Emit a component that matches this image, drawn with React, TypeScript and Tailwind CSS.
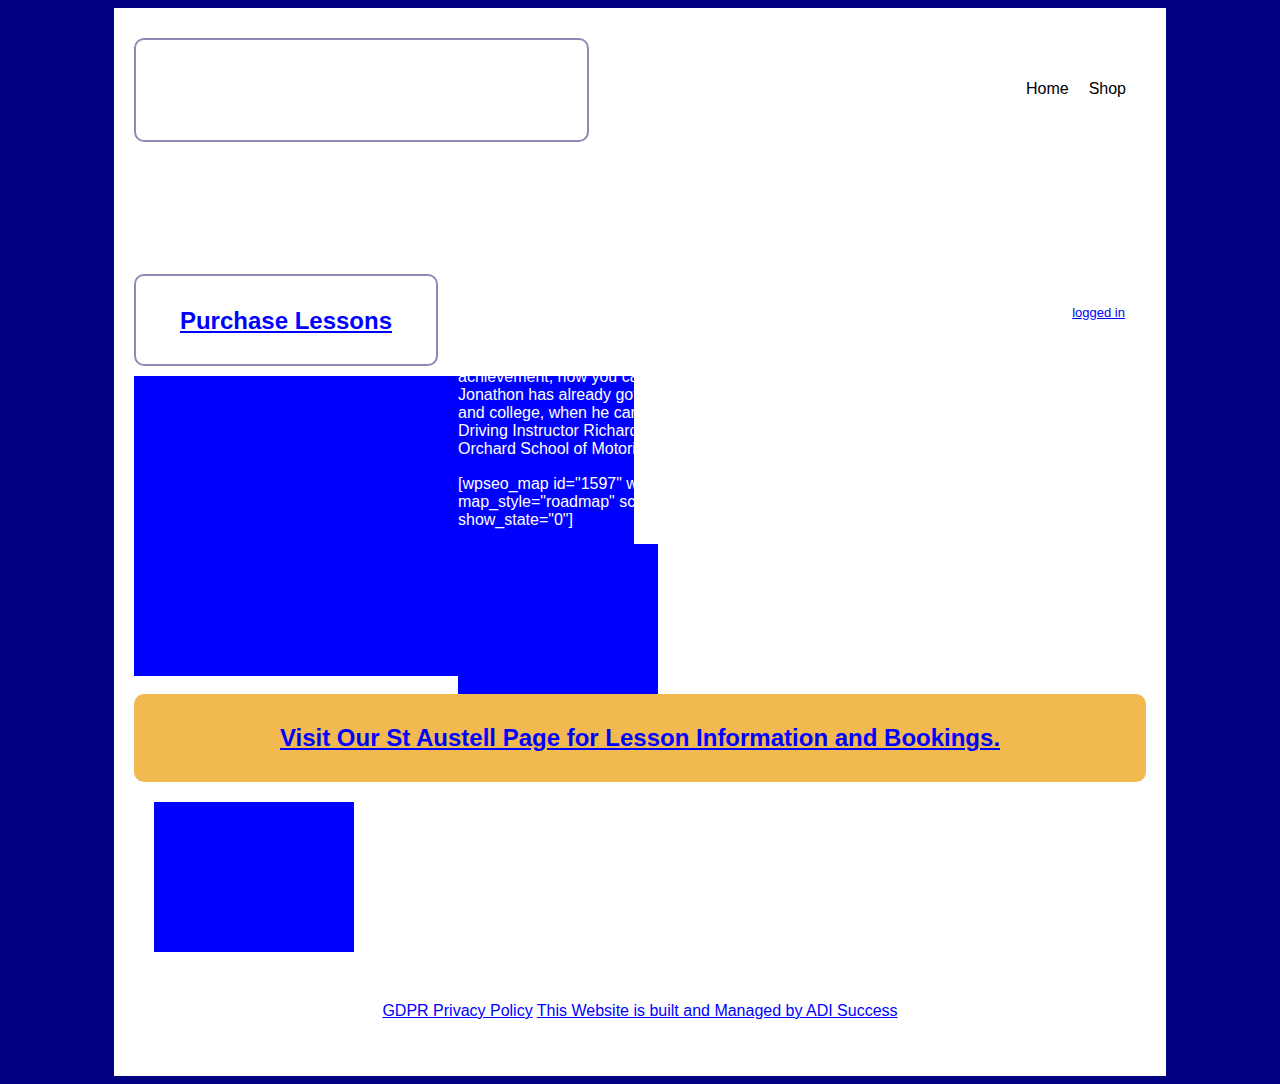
import React from "react";

function App() {
  return (
    <div className="min-h-screen bg-[#000080] py-2 font-['Liberation_Sans',Arial,sans-serif]">
      <div className="mx-auto w-[1052px] bg-white px-5 pt-[30px]">
        {/* header */}
        <div className="flex items-center justify-between">
          <div className="h-[104px] w-[455px] rounded-[10px] border-2 border-[#8e8ab5]"></div>
          <nav className="mb-[2px] flex gap-5 pr-5 text-base leading-[18px] text-black">
            <a href="#">Home</a>
            <a href="#">Shop</a>
          </nav>
        </div>

        <div className="mt-[132px] flex justify-between">
          <div className="flex h-[92px] w-[304px] items-center justify-center rounded-[10px] border-2 border-[#8e8ab5] pt-[2px]">
            <a href="#" className="text-2xl font-bold text-[#0000ff] underline">
              Purchase Lessons
            </a>
          </div>
          <a
            href="#"
            className="mr-[21px] mt-[31px] self-start text-[13px] leading-[15px] text-[#0000ff] underline"
          >
            logged in
          </a>
        </div>

        <div className="mt-[10px] flex">
          <div className="h-[300px] w-[324px] bg-[#0000ff]"></div>
          <div className="flex w-[200px] flex-col">
            <div className="h-[168px] w-[176px] overflow-hidden bg-[#0000ff] text-base leading-[18px] text-white">
              <div className="-mt-[8px] whitespace-nowrap">
                <p>
                  achievement, now you can do it too.
                  <br />
                  Jonathon has already got his licence
                  <br />
                  and college, when he came to his
                  <br />
                  Driving Instructor Richard at The
                  <br />
                  Orchard School of Motoring.
                </p>
                <p className="mt-[17px]">
                  [wpseo_map id="1597" width="100%"
                  <br />
                  map_style="roadmap" scrollable="1"
                  <br />
                  show_state="0"]
                </p>
              </div>
            </div>
            <div className="h-[150px] w-[200px] bg-[#0000ff]"></div>
          </div>
        </div>

        <div className="flex h-[88px] items-center justify-center rounded-[10px] bg-[#f2b950]">
          <a href="#" className="text-2xl font-bold text-[#0000ff] underline">
            Visit Our St Austell Page for Lesson Information and Bookings.
          </a>
        </div>

        <div className="ml-5 mt-5 h-[150px] w-[200px] bg-[#0000ff]"></div>

        <footer className="pb-[56px] pt-[50px] text-center text-base leading-[18px]">
          <a href="#" className="text-[#0000ff] underline">
            GDPR Privacy Policy
          </a>{" "}
          <a href="#" className="text-[#0000ff] underline">
            This Website is built and Managed by ADI Success
          </a>
        </footer>
      </div>
    </div>
  );
}

export default App;
